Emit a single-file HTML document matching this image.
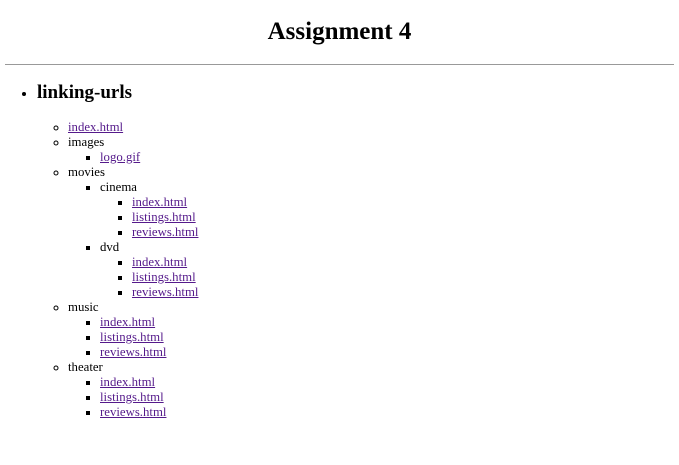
<!DOCTYPE html>
<html><head><meta charset="utf-8"><style>
body{margin:0;font-family:"Liberation Serif",serif;color:#000;background:#fff;}
h1{margin:0;height:64px;line-height:64px;text-align:center;font-size:25px;font-weight:bold;}
hr{margin:0 5px;border:0;border-top:1px solid #999;height:0;}
ul{margin:0;padding:0;}
ul.top{padding-left:37px;margin-top:17px;list-style:disc;}
.h2{font-size:19px;font-weight:bold;line-height:22px;}
ul ul{padding-left:31px;font-size:12.8px;font-weight:normal;line-height:15px;list-style:circle;margin-top:15.5px;}
ul ul ul{padding-left:32px;margin-top:0;list-style:square;}
a{color:#551a8b;}
</style></head><body>
<h1>Assignment 4</h1>
<hr>
<ul class="top"><li><span class="h2">linking-urls</span>
<ul>
<li><a href="#">index.html</a></li>
<li>images<ul><li><a href="#">logo.gif</a></li></ul></li>
<li>movies<ul>
<li>cinema<ul><li><a href="#">index.html</a></li><li><a href="#">listings.html</a></li><li><a href="#">reviews.html</a></li></ul></li>
<li>dvd<ul><li><a href="#">index.html</a></li><li><a href="#">listings.html</a></li><li><a href="#">reviews.html</a></li></ul></li>
</ul></li>
<li>music<ul><li><a href="#">index.html</a></li><li><a href="#">listings.html</a></li><li><a href="#">reviews.html</a></li></ul></li>
<li>theater<ul><li><a href="#">index.html</a></li><li><a href="#">listings.html</a></li><li><a href="#">reviews.html</a></li></ul></li>
</ul>
</li></ul>
</body></html>
